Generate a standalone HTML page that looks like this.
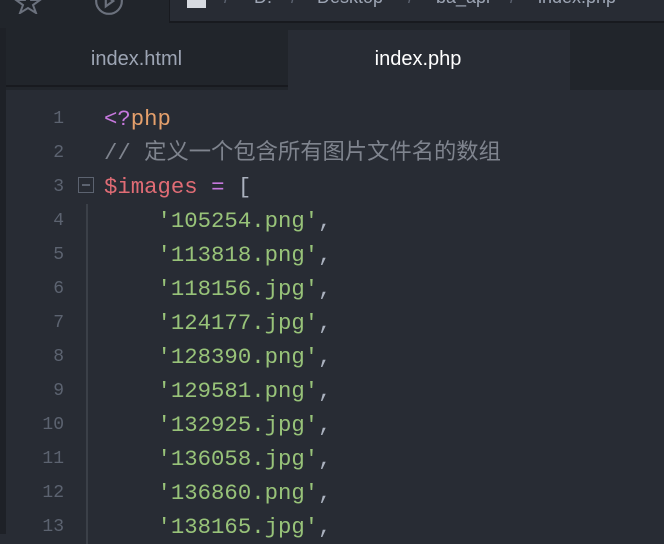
<!DOCTYPE html>
<html><head><meta charset="utf-8"><style>
*{margin:0;padding:0;box-sizing:border-box}
body{width:664px;height:534px;overflow:hidden;background:#282c34;position:relative;font-family:"Liberation Sans","Noto Sans CJK SC",sans-serif}
.top{position:absolute;left:0;top:0;width:664px;height:28px;background:#21252b}
.crumb{position:absolute;left:169px;top:-2px;width:495px;height:25px;background:#282c34;border-left:1px solid #181a1f;border-bottom:2px solid #181a1f;color:#9da5b4;font-size:18px;line-height:1;white-space:nowrap}
.crumb span{position:absolute;top:-10px}
.tabs{position:absolute;left:0;top:28px;width:664px;height:62px;background:#21252b}
.tab1{position:absolute;left:5px;top:3px;width:283px;height:56px;background:#21252b;border-bottom:2px solid #181a1f;color:#9da5b4;font-size:20px;text-align:center;line-height:56px;padding-right:20px}
.tab2{position:absolute;left:288px;top:2px;width:282px;height:60px;background:#282c34;color:#fff;font-size:20px;text-align:center;line-height:58px;padding-right:22px}
.lstrip{position:absolute;left:0;top:28px;width:6px;height:506px;background:#1e2127}
.ln{position:absolute;left:0;width:64px;text-align:right;color:#5c6370;font-size:18px;font-family:"Liberation Mono",monospace}
.tx{position:absolute;left:104px;white-space:pre}
.k{color:#c678dd}.o{color:#e5a06c}.c{color:#7f848e}.v{color:#e06c75}.s{color:#98c379}.p{color:#abb2bf}
.guide{position:absolute;left:86px;top:204px;width:2px;height:340px;background:#3b4048}
</style></head><body>
<div class="top">
<svg style="position:absolute;left:14px;top:-8px" width="28" height="22" viewBox="0 0 28 22"><path d="M14 0 L17 8 L26 8 L19 13 L22 21 L14 16 L6 21 L9 13 L2 8 L11 8Z" fill="none" stroke="#6b717d" stroke-width="2"/></svg>
<svg style="position:absolute;left:94px;top:-14px" width="30" height="30" viewBox="0 0 28 28"><circle cx="14" cy="14" r="12" fill="none" stroke="#6b717d" stroke-width="2"/><path d="M11 9 L18 14 L11 19Z" fill="none" stroke="#6b717d" stroke-width="2"/></svg>
<div class="crumb">
<div style="position:absolute;left:17px;top:0;width:19px;height:10px;background:#d7dae0"></div>
<span style="left:54px;color:#5c6370">/</span><span style="left:84px">D:</span>
<span style="left:121px;color:#5c6370">/</span><span style="left:147px">Desktop</span>
<span style="left:238px;color:#5c6370">/</span><span style="left:266px">ba_api</span>
<span style="left:340px;color:#5c6370">/</span><span style="left:368px">index.php</span>
</div>
</div>
<div class="tabs">
<div class="tab1">index.html</div>
<div class="tab2">index.php</div>
</div>
<div class="lstrip"></div>
<div class="guide"></div>
<div style="position:absolute;left:78px;top:177px;width:16px;height:16px;border:1.5px solid #5c6370"></div>
<div style="position:absolute;left:82px;top:184px;width:8px;height:1.5px;background:#5c6370"></div>
<div id="c"></div>
<script>
var L=[
'<span class="k">&lt;?</span><span class="o">php</span>',
'<span class="c">// 定义一个包含所有图片文件名的数组</span>',
'<span class="v">$images</span> <span class="k">=</span> <span class="p">[</span>'];
var f=['105254.png','113818.png','118156.jpg','124177.jpg','128390.png','129581.png','132925.jpg','136058.jpg','136860.png','138165.jpg'];
f.forEach(function(x){L.push('    <span class="s">\''+x+'\'</span><span class="p">,</span>')});
var h='';
L.forEach(function(t,i){var y=102+i*34;
h+='<div class="ln" style="top:'+(y+6)+'px;line-height:22px">'+(i+1)+'</div>';
h+='<div class="tx" style="top:'+y+'px;line-height:34px;font-family:\'Liberation Mono\',\'Noto Sans CJK SC\',monospace;font-size:22.3px">'+t+'</div>';});
document.getElementById('c').innerHTML=h;
</script>
</body></html>
